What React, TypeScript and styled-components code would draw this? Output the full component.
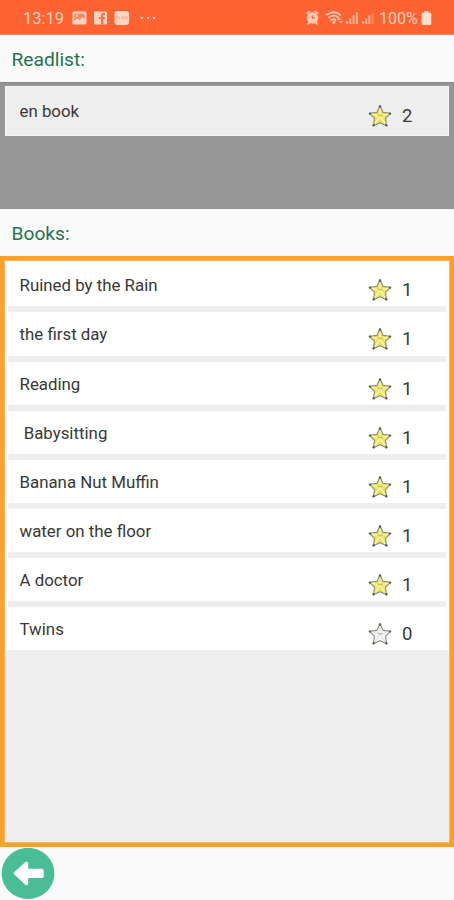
import React from "react";
import styled, { createGlobalStyle } from "styled-components";

const GlobalStyle = createGlobalStyle`
  * { box-sizing: border-box; }
  body { margin: 0; background: #fafafa; font-family: Roboto, sans-serif; }
`;

const Screen = styled.main`
  width: 454px;
  height: 900px;
  display: flex;
  flex-direction: column;
  overflow: hidden;
  background: #fafafa;
`;

const StatusBar = styled.header`
  height: 35px;
  flex: none;
  display: flex;
  align-items: center;
  justify-content: space-between;
  padding: 1px 22px 0 23px;
  background: #ff6333;
  border-bottom: 1px solid #ff8660;
  color: #ffd0bd;
`;

const StatusGroup = styled.div`
  display: flex;
  align-items: center;
  svg { display: block; }
`;

const Clock = styled.span`
  width: 49px;
  font-size: 16.5px;
  line-height: 20px;
  padding-top: 2px;
`;

const BatteryText = styled.span`
  width: 42px;
  margin-left: 4px;
  font-size: 16px;
  line-height: 20px;
  padding-top: 2px;
  white-space: nowrap;
`;

const SectionTitle = styled.h2`
  margin: 0;
  height: 47px;
  flex: none;
  padding: 1px 11.5px 0;
  line-height: 47px;
  font-size: 19.2px;
  font-weight: 400;
  color: #27724f;
`;

const ReadlistPanel = styled.section`
  height: 127px;
  flex: none;
  padding: 3px 5px;
  background: #969696;
  border-top: 1px solid #888;
`;

const BooksPanel = styled.section`
  height: 591px;
  flex: none;
  padding: 5px;
  background: #f9a02d;
`;

const BooksBody = styled.div`
  height: 100%;
  background: #eee;
  box-shadow: 0 0 0 1px #fbb55c;
`;

const BookList = styled.div`
  display: flex;
  flex-direction: column;
  gap: 6px;
  padding: 2px 3px 0;
  background: linear-gradient(to right, #fbfbfb 3px, #eee 3px, #eee 441px, #fbfbfb 441px);
  border-top: 1px solid #fbfbfb;
`;

const Row = styled.div<{ $selected?: boolean }>`
  display: flex;
  align-items: flex-start;
  height: ${(p) => (p.$selected ? "50px" : "43.15px")};
  padding: ${(p) => (p.$selected ? "12px 0 0 13.5px" : "10px 0 0 11.5px")};
  background: ${(p) => (p.$selected ? "#eee" : "#fff")};
  border: ${(p) => (p.$selected ? "1px solid #f8f8f8" : "none")};
  color: #383838;
`;

const FirstRow = styled(Row)`
  margin-top: -2px;
  padding-top: 11.4px;
  height: 44.4px;
`;

const BookName = styled.span`
  width: 348.5px;
  flex: none;
  font-size: 16.85px;
  line-height: 24px;
  white-space: pre;
`;

const Score = styled.span`
  display: flex;
  align-items: center;
  gap: 10px;
  height: 24px;
  margin-top: 5px;
  font-size: 18.5px;
`;

const StarDrawing = styled.svg`
  display: block;
  width: 24px;
  height: 24px;
  flex: none;
`;

const Footer = styled.footer`
  flex: 1;
  padding: 1px;
`;

const BackButton = styled.button`
  display: block;
  width: 54px;
  height: 52px;
  padding: 0;
  border: 0;
  background: none;
`;

const Star = ({ filled }: { filled: boolean }) => (
  <StarDrawing viewBox="0 0 24 24">
    <path
      d="M12 1.8 L15.1 8.4 L22.5 9.3 L17.5 14.4 L18.6 21.8 L12 18.7 L5.4 21.8 L6.5 14.4 L1.5 9.3 L8.9 8.4 Z"
      fill={filled ? "#ebe36b" : "#f5f5f5"}
      stroke="#8b8b7c"
      strokeWidth="1.1"
      strokeLinejoin="round"
    />
    <path
      d="M12 5 L12 10 M4 10 L12 12.3 L20 10 M7 19.5 L12 12.3 L17 19.5"
      fill="none"
      stroke={filled ? "#fff8a8" : "#e2e2e2"}
      strokeWidth="1.2"
    />
    <path d="M9.5 10.9 L12 12 L14.8 11.5" fill="none" stroke={filled ? "#b7a83e" : "#aaa"} strokeWidth=".9" />
    <g fill="#5d5f58">
      <circle cx="12" cy="2.5" r="1.2" />
      <circle cx="2" cy="9.6" r="1.2" />
      <circle cx="22" cy="9.6" r="1.2" />
      <circle cx="5.7" cy="21.2" r="1.2" />
      <circle cx="18.3" cy="21.2" r="1.2" />
    </g>
  </StarDrawing>
);

const NotificationIcons = () => (
  <svg width="86" height="18" viewBox="0 0 86 18">
    <g fill="#ffd5c4">
      <rect x="0.5" y="2.5" width="14" height="13" rx="1.5" />
      <rect x="22" y="2.5" width="13" height="13" rx="1" />
      <rect x="42.5" y="2" width="14.5" height="14" rx="3" />
      <circle cx="69.8" cy="9" r="1.2" />
      <circle cx="76" cy="9" r="1.2" />
      <circle cx="82" cy="9" r="1.2" />
    </g>
    <path d="M2.3 4.8 H12.7 V10.2 L10.3 8 L7.6 11 L5.2 9.2 L2.3 12 Z" fill="#fa8760" />
    <circle cx="5" cy="6.9" r="1.1" fill="#ffd5c4" />
    <path d="M29 15.5 V10 H26.8 V7.9 H29 V6.3 Q29 3.9 31.5 3.9 H33 V6 H32 Q31.2 6 31.2 6.8 V7.9 H33 L32.6 10 H31.2 V15.5 Z" fill="#ff7044" />
    <path d="M45 6.5 V10.5 M45 8.5 Q46.5 7 47.5 8.5 V10.5 M49.5 10.5 V8 H51.5 V10.5 M53.2 10.5 V8 H55.2 V10.5" fill="none" stroke="#ffa98b" strokeWidth="1" />
  </svg>
);

const ConnectionIcons = () => (
  <svg width="69" height="20" viewBox="0 0 69 20">
    <g fill="none" stroke="#ffcbb6" strokeLinecap="round">
      <path d="M1.3 5.2 L3.6 3.6 M9.4 3.6 L11.7 5.2 M3 15 L2 15.8 M10 15 L11 15.8" strokeWidth="1.8" />
      <path d="M20.8 6.8 Q27.5 1.7 34.2 6.8 M23 9.4 Q27.5 6 32 9.4 M25.2 12 Q27.5 10.2 29.5 12" strokeWidth="1.8" />
    </g>
    <circle cx="6.5" cy="10" r="5.8" fill="#ffcbb6" />
    <path d="M6.5 7.2 V10.2 H9" fill="none" stroke="#f1713f" strokeWidth="1.3" />
    <g fill="#ffcbb6">
      <circle cx="27.8" cy="14.3" r="1.5" />
      <path d="M31 12 L33 9.6 L35 12 Z M33 13 H37 L35 15.5 Z" />
    </g>
    <g fill="#ffb698">
      <path d="M40 13 h2 v3 h-2z M43.3 10.5 h2 v5.5 h-2z M46.6 7.5 h2 v8.5 h-2z M49.8 4.5 h2 v11.5 h-2z" />
      <path d="M56 13 h2 v3 h-2z M59.2 10.5 h2 v5.5 h-2z M62.4 7.5 h2 v8.5 h-2z" />
      <path d="M65.8 5 h1.7 v11 h-1.7z" opacity=".45" />
    </g>
  </svg>
);

const Battery = () => (
  <svg width="11" height="16" viewBox="0 0 11 16">
    <path d="M3.5 1 H7.5 V2.7 H9 Q10.3 2.7 10.3 4 V13.7 Q10.3 15 9 15 H2 Q.7 15 .7 13.7 V4 Q.7 2.7 2 2.7 H3.5 Z" fill="#ffddcf" />
  </svg>
);

type Book = { name: string; stars: number };

const books: Book[] = [
  { name: "Ruined by the Rain", stars: 1 },
  { name: "the first day", stars: 1 },
  { name: "Reading", stars: 1 },
  { name: " Babysitting", stars: 1 },
  { name: "Banana Nut Muffin", stars: 1 },
  { name: "water on the floor", stars: 1 },
  { name: "A doctor", stars: 1 },
  { name: "Twins", stars: 0 },
];

const BookContent = ({ name, stars }: Book) => (
  <>
    <BookName>{name}</BookName>
    <Score>
      <Star filled={stars > 0} />
      {stars}
    </Score>
  </>
);

export default function App() {
  return (
    <>
      <GlobalStyle />
      <Screen>
        <StatusBar>
          <StatusGroup>
            <Clock>13:19</Clock>
            <NotificationIcons />
          </StatusGroup>
          <StatusGroup>
            <ConnectionIcons />
            <BatteryText>100%</BatteryText>
            <Battery />
          </StatusGroup>
        </StatusBar>
        <SectionTitle>Readlist:</SectionTitle>
        <ReadlistPanel>
          <Row $selected>
            <BookContent name="en book" stars={2} />
          </Row>
        </ReadlistPanel>
        <SectionTitle>Books:</SectionTitle>
        <BooksPanel>
          <BooksBody>
            <BookList>
              {books.map((book, i) => {
                const Item = i === 0 ? FirstRow : Row;
                return (
                  <Item key={book.name}>
                    <BookContent {...book} />
                  </Item>
                );
              })}
            </BookList>
          </BooksBody>
        </BooksPanel>
        <Footer>
          <BackButton aria-label="Back">
            <svg width="54" height="52" viewBox="0 0 54 52">
              <ellipse cx="27" cy="25.4" rx="26.4" ry="25.6" fill="#48bd96" />
              <path
                d="M14.5 25.3 L25.5 15.3 V22.5 H41 V28.2 H25.5 V35.5 Z"
                fill="#fff"
                stroke="#fff"
                strokeWidth="3.4"
                strokeLinejoin="round"
              />
            </svg>
          </BackButton>
        </Footer>
      </Screen>
    </>
  );
}
